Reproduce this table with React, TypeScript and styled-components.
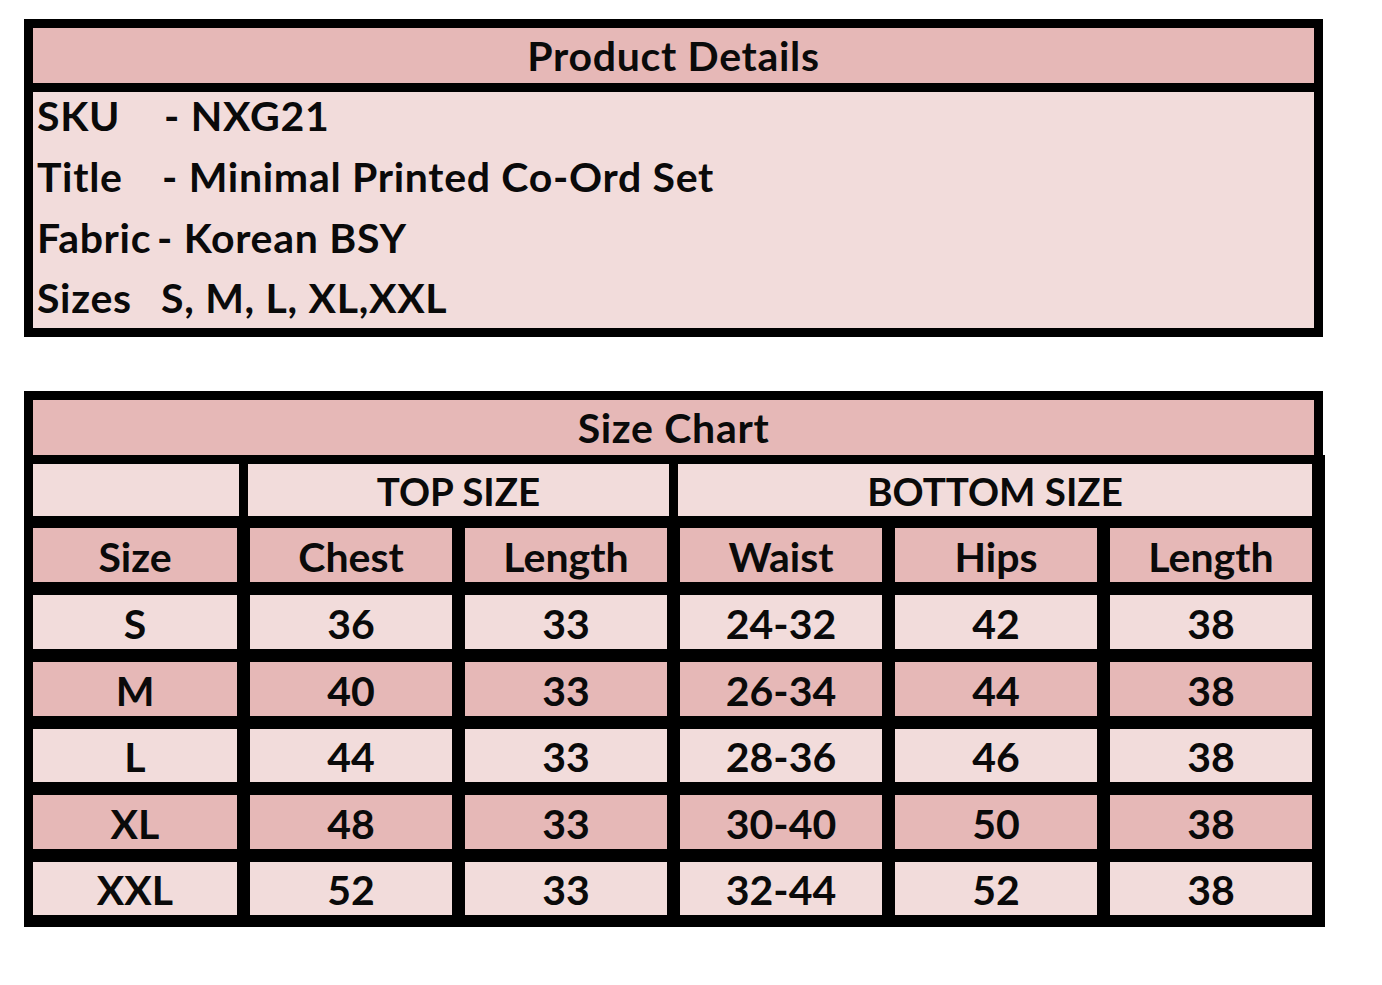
import React from "react";
import styled, { createGlobalStyle } from "styled-components";

const DARK = "#e6b8b7";
const LIGHT = "#f2dcdb";

const Global = createGlobalStyle`
  html, body { margin: 0; padding: 0; background: #ffffff; }
  body { font-family: Lato, "Open Sans", "Liberation Sans", sans-serif; color: #0a0a0a; }
`;

const Page = styled.div`
  display: flex;
  flex-direction: column;
  align-items: flex-start;
  gap: 54px;
  padding: 19px 0 0 24px;
`;

const DetailsTable = styled.section`
  box-sizing: border-box;
  width: 1299px;
  background: #000;
  padding: 9px;
  display: flex;
  flex-direction: column;
  gap: 9px;
`;

const Banner = styled.div`
  height: 55px;
  background: ${DARK};
  display: flex;
  align-items: center;
  justify-content: center;
  font-weight: 700;
  font-size: 41px;
  letter-spacing: 0.7px;
  line-height: 1;
  box-sizing: border-box;
`;

const DetailsBody = styled.div`
  height: 236px;
  background: ${LIGHT};
  display: flex;
  flex-direction: column;
  padding-left: 4px;
  overflow: hidden;
`;

const DetailLine = styled.div<{ $h: number }>`
  flex: 0 0 ${(p) => p.$h}px;
  box-sizing: border-box;
  padding-top: 3px;
  display: flex;
  font-weight: 700;
  font-size: 41px;
  letter-spacing: 0.7px;
  line-height: 1;
  white-space: nowrap;
`;

const Label = styled.span<{ $w: number }>`
  flex: 0 0 auto;
  min-width: ${(p) => p.$w}px;
`;

const Value = styled.span``;

const SizeChart = styled.section`
  display: flex;
  flex-direction: column;
  align-items: flex-start;
`;

const ChartTitleBox = styled.div`
  box-sizing: border-box;
  width: 1299px;
  background: #000;
  padding: 9px 9px 0 9px;
`;

const ChartGrid = styled.div`
  box-sizing: border-box;
  width: 1301px;
  background: #000;
  padding: 9px 13px 12px 9px;
`;

const GroupRow = styled.div`
  display: grid;
  grid-template-columns: 206px 421px 634px;
  column-gap: 9px;
  height: 52px;
  margin-bottom: 12px;
`;

const Cells = styled.div`
  display: grid;
  grid-template-columns: 204px repeat(5, 202px);
  grid-template-rows: 54px 54px 54px 53px 54px 53px;
  column-gap: 13px;
  row-gap: 13px;
`;

const Cell = styled.div<{ $tone: "dark" | "light"; $size?: number }>`
  background: ${(p) => (p.$tone === "dark" ? DARK : LIGHT)};
  display: flex;
  align-items: center;
  justify-content: center;
  font-weight: 700;
  font-size: ${(p) => p.$size ?? 41}px;
  line-height: 1;
  padding-top: 2px;
  box-sizing: border-box;
  white-space: nowrap;
`;

const details = [
  { label: "SKU", w: 127, value: "- NXG21", h: 61 },
  { label: "Title", w: 125, value: "- Minimal Printed Co-Ord Set", h: 61 },
  { label: "Fabric", w: 120, value: "- Korean BSY", h: 60 },
  { label: "Sizes", w: 124, value: "S, M, L, XL,XXL", h: 60 },
];

const headers = ["Size", "Chest", "Length", "Waist", "Hips", "Length"];

const rows: string[][] = [
  ["S", "36", "33", "24-32", "42", "38"],
  ["M", "40", "33", "26-34", "44", "38"],
  ["L", "44", "33", "28-36", "46", "38"],
  ["XL", "48", "33", "30-40", "50", "38"],
  ["XXL", "52", "33", "32-44", "52", "38"],
];

export default function App() {
  return (
    <>
      <Global />
      <Page>
        <DetailsTable>
          <Banner>Product Details</Banner>
          <DetailsBody>
            {details.map((d) => (
              <DetailLine key={d.label} $h={d.h}>
                <Label $w={d.w}>{d.label}</Label>
                <Value>{d.value}</Value>
              </DetailLine>
            ))}
          </DetailsBody>
        </DetailsTable>

        <SizeChart>
          <ChartTitleBox>
            <Banner>Size Chart</Banner>
          </ChartTitleBox>
          <ChartGrid>
            <GroupRow>
              <Cell $tone="light" />
              <Cell $tone="light" $size={38.5}>TOP SIZE</Cell>
              <Cell $tone="light" $size={38.5}>BOTTOM SIZE</Cell>
            </GroupRow>
            <Cells>
              {headers.map((h, i) => (
                <Cell key={`h${i}`} $tone="dark">
                  {h}
                </Cell>
              ))}
              {rows.map((r, ri) =>
                r.map((v, ci) => (
                  <Cell key={`${ri}-${ci}`} $tone={ri % 2 === 0 ? "light" : "dark"}>
                    {v}
                  </Cell>
                ))
              )}
            </Cells>
          </ChartGrid>
        </SizeChart>
      </Page>
    </>
  );
}
